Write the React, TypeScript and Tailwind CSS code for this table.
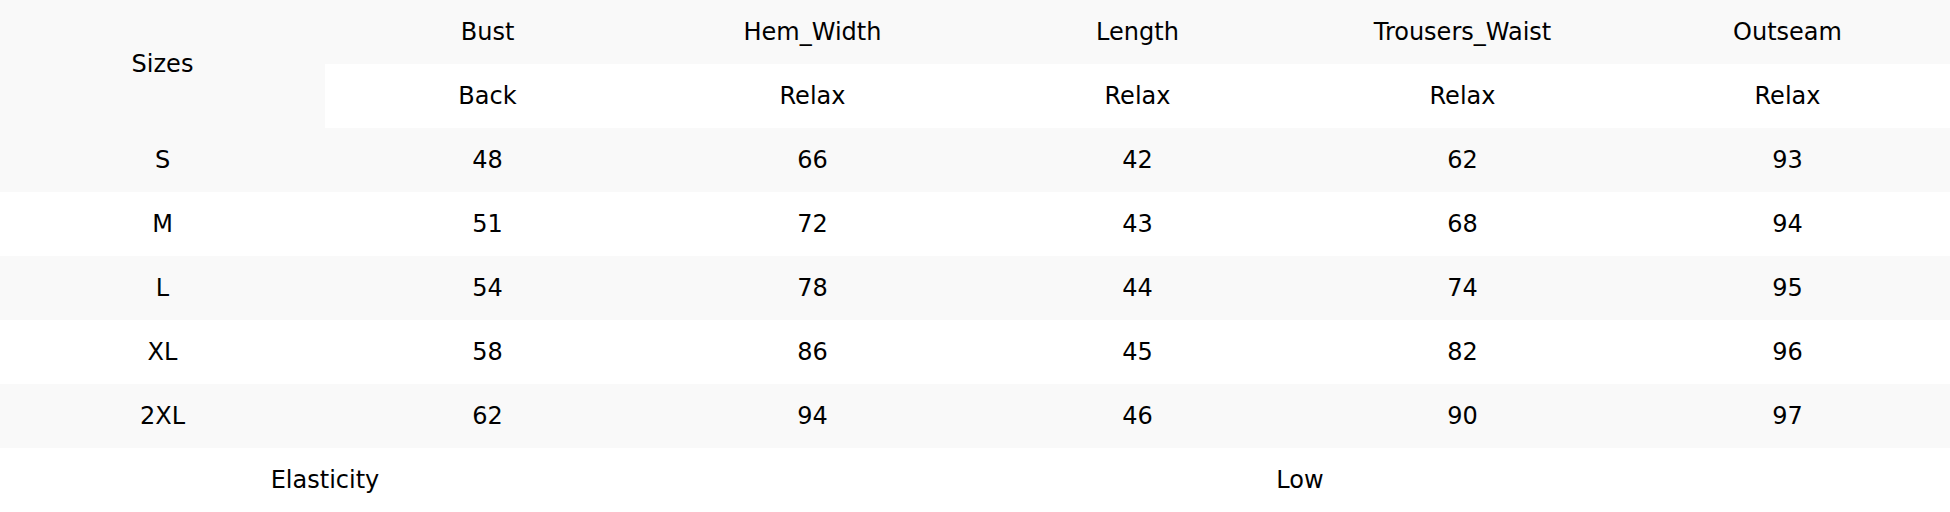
const cols = ['Bust', 'Hem_Width', 'Length', 'Trousers_Waist', 'Outseam'];
const subs = ['Back', 'Relax', 'Relax', 'Relax', 'Relax'];
const rows: [string, number[]][] = [
  ['S', [48, 66, 42, 62, 93]],
  ['M', [51, 72, 43, 68, 94]],
  ['L', [54, 78, 44, 74, 95]],
  ['XL', [58, 86, 45, 82, 96]],
  ['2XL', [62, 94, 46, 90, 97]],
];

export default function App() {
  return (
    <div className="w-[1950px] h-[512px] bg-white text-black text-[24px] font-['DejaVu_Sans',sans-serif]">
      <table className="w-full table-fixed border-collapse text-center">
        <tbody>
          <tr className="h-16 bg-[#f9f9f9]">
            <td rowSpan={2} className="w-[325px] bg-[#f9f9f9]">Sizes</td>
            {cols.map((c) => (
              <td key={c}>{c}</td>
            ))}
          </tr>
          <tr className="h-16 bg-white">
            {subs.map((s, i) => (
              <td key={i}>{s}</td>
            ))}
          </tr>
          {rows.map(([size, vals], i) => (
            <tr key={size} className={i % 2 === 0 ? 'h-16 bg-[#f9f9f9]' : 'h-16 bg-white'}>
              <td>{size}</td>
              {vals.map((v, j) => (
                <td key={j}>{v}</td>
              ))}
            </tr>
          ))}
          <tr className="h-16 bg-white">
            <td colSpan={2}>Elasticity</td>
            <td colSpan={4}>Low</td>
          </tr>
        </tbody>
      </table>
    </div>
  );
}
